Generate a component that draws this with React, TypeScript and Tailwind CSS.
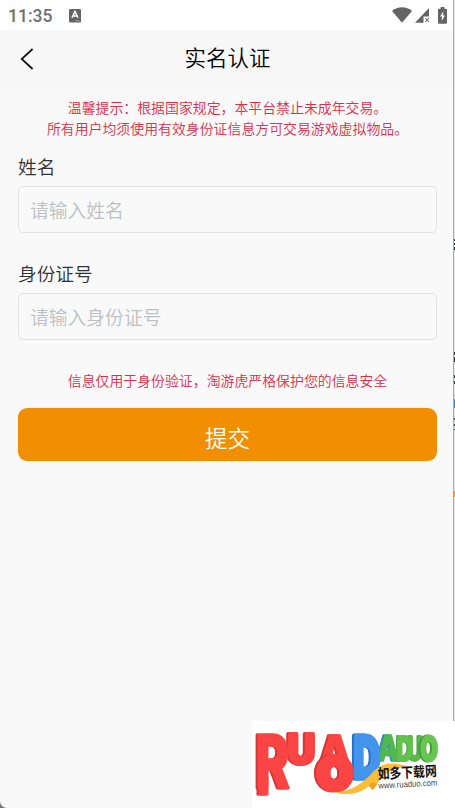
interface FieldProps {
  id: string;
  label: string;
  placeholder: string;
}

interface LogoLetterProps {
  char: string;
  x: number;
  y: number;
  sx: number;
  sy: number;
  fill: string;
  stroke?: number;
}

function StatusBar() {
  return (
    <div className="flex h-[30px] items-center bg-white pl-2 pr-[7px] text-[#646464]">
      <span className="mt-[3px] w-[61px] font-[Roboto,sans-serif] text-[17.5px] font-medium leading-none text-[#707070]">11:35</span>
      <svg className="mt-px" width="12" height="14" viewBox="0 0 12 14">
        <rect width="12" height="13.5" rx="1.2" fill="#646464" />
        <path d="M3 8.800 6 2.500l3 6.300M4 7h4" fill="none" stroke="#fff" strokeWidth="1.500" />
        <path d="M6.500 11.800h4" stroke="#bbb" strokeWidth="0.8" />
      </svg>
      <div className="ml-auto flex items-center">
        <svg width="20" height="16" viewBox="0 0 20 16" fill="#646464">
          <path d="M0 3.900C5.500-1 14.500-1 20 3.900L10 15.800Z" />
        </svg>
        <svg className="ml-[3px]" width="16" height="15" viewBox="0 0 16 15">
          <path d="M14 0v8.500H8.500v6.300H0Z" fill="#646464" />
          <path d="m10.300 10 3.700 4m0-4-3.700 4" stroke="#646464" strokeWidth="1.100" />
        </svg>
        <svg className="ml-[7px] mr-px" width="9" height="17" viewBox="0 0 10 17" preserveAspectRatio="none">
          <path d="M3 0h4v1.700h1.800q1.200 0 1.200 1.200v12.600q0 1.200-1.200 1.200H1.200Q0 16.700 0 15.500V2.900q0-1.200 1.200-1.200H3Z" fill="#646464" />
          <path d="M6 4.300 2.300 9.600h2.200L4 14l3.800-5.500H5.600Z" fill="#fff" />
        </svg>
      </div>
    </div>
  );
}

function Header() {
  return (
    <header className="grid h-[57px] grid-cols-[60px_1fr_60px] items-center bg-[#f7f7f7]">
      <button className="pl-[20px]" aria-label="返回">
        <svg width="14" height="22" viewBox="0 0 14 22" fill="none" stroke="#111" strokeWidth="1.700">
          <path d="M12.600 1 1.700 11l10.900 10" />
        </svg>
      </button>
      <h1 className="pb-[3px] text-center text-[21.500px] leading-none text-black">实名认证</h1>
    </header>
  );
}

function Field({ id, label, placeholder }: FieldProps) {
  return (
    <div className="flex flex-col">
      <label htmlFor={id} className="h-[35px] text-[18.7px] leading-[30px] text-[#333]">
        {label}
      </label>
      <input
        id={id}
        placeholder={placeholder}
        className="h-[47px] rounded-[5px] border border-[#e0e2e4] px-[11px] pb-px text-[18.8px] placeholder:text-[#bcc1c5]"
      />
    </div>
  );
}

function LogoLetter({ char, x, y, sx, sy, fill, stroke = 0.4 }: LogoLetterProps) {
  return (
    <text
      transform={`translate(${x} ${y}) scale(${sx} ${sy})`}
      fontSize="10"
      fontWeight="800"
      fill={fill}
      stroke={fill}
      strokeWidth={stroke}
      strokeLinejoin="round"
    >
      {char}
    </text>
  );
}

function SiteLogo() {
  return (
    <div className="absolute bottom-0 right-0 h-[87px] w-[203px] bg-white">
      <svg className="overflow-visible" width="203" height="87" viewBox="0 0 203 87" fontFamily="Inter, sans-serif">
        <g className="drop-shadow-[-1px_0.5px_0_#3f9c3a]">
          <LogoLetter char="U" x={155.500} y={40} sx={2.100} sy={3.450} fill="#5bb947" />
        </g>
        <g className="drop-shadow-[-1px_0.5px_0_#3f9c3a]">
          <LogoLetter char="D" x={144.500} y={40} sx={2.300} sy={3.450} fill="#62c34c" stroke={0.600} />
        </g>
        <g className="drop-shadow-[-1.5px_0.5px_0_#3f9c3a]">
          <LogoLetter char="O" x={168.500} y={40} sx={2.250} sy={3.350} fill="#69c552" stroke={0.900} />
        </g>
        <g className="drop-shadow-[-2px_0.5px_0_#348fba]">
          <LogoLetter char="A" x={125.500} y={39.500} sx={2.800} sy={3.500} fill="#4fb850" />
        </g>
        <g className="drop-shadow-[-2px_0.5px_0_#2670c8]">
          <LogoLetter char="D" x={101.500} y={56.500} sx={3.700} sy={5.800} fill="#4394ed" stroke={0.900} />
        </g>
        <path d="M83 71C100 71 112 61 121 51C131 40 145 41 156 46C142 46 134 52 127 60L121 69L117 65C106 74 92 75 83 71Z" fill="#fbbd36" />
        <path d="m117 65 3-4 5 2-4 6Z" fill="#eca31e" />
        <g className="drop-shadow-[-1.5px_0.5px_0_#d43434]">
          <LogoLetter char="U" x={36} y={43} sx={3.750} sy={4.050} fill="#fb4444" stroke={1} />
        </g>
        <g className="drop-shadow-[-1.5px_0.5px_0_#d43434]">
          <LogoLetter char="A" x={66} y={48.500} sx={4.450} sy={4.800} fill="#fb4444" stroke={0.300} />
          <path d="m71 38-6 14 9-7ZM96 38l6 14-9-7Z" fill="#fb4444" />
        </g>
        <g className="drop-shadow-[-1.5px_0.5px_0_#d43434]">
          <LogoLetter char="O" x={65.500} y={67.500} sx={4.500} sy={4.450} fill="#fb4444" stroke={1.500} />
        </g>
        <g className="drop-shadow-[-1.5px_0.5px_0_#d43434]">
          <rect x="6.500" y="55" width="10" height="19.500" rx="0.500" fill="#fb4444" />
          <LogoLetter char="R" x={3.800} y={67} sx={5.100} sy={7.250} fill="#fb4444" />
        </g>
        <g transform="rotate(-3 126 58)">
          <text x="126" y="58" fontFamily="Noto Sans CJK SC, sans-serif" fontSize="14" fontWeight="700" fill="#111" textLength="59" lengthAdjust="spacingAndGlyphs">
            如多下载网
          </text>
          <text x="126" y="67.500" fontFamily="Liberation Sans, sans-serif" fontSize="8.500" fontWeight="400" fill="#444" textLength="59" lengthAdjust="spacingAndGlyphs">
            www.ruaduo.com
          </text>
        </g>
      </svg>
    </div>
  );
}

// Sliver of the window underneath, cut off by the right edge
function WindowEdge() {
  return (
    <div className="absolute right-0 top-0 h-[721px] w-[2px] overflow-hidden border-l border-[#aaa] bg-[#e5e5e5]">
      <svg width="1" height="721" viewBox="0 0 1 721">
        <path d="M.5 239v2m0 2v2m0 2v3M.5 352v3m0 2v5M.5 375v3m0 3v3M.5 418v2m0 4v2m0 3v1" stroke="#33363c" />
        <path d="M.5 399v9" stroke="#4d85c4" />
        <path d="M.5 395v1M.5 491v6" stroke="#e79a26" />
      </svg>
    </div>
  );
}

export default function App() {
  return (
    <div className="relative h-[808px] w-[455px] overflow-hidden bg-[#777] font-[Noto_Sans_CJK_SC,sans-serif] font-[350]">
      <div className="h-full overflow-hidden rounded-bl-[7px] bg-[#f9f9f9]">
        <StatusBar />
        <Header />
        <main className="px-[18px] pt-[10px]">
          <p className="-mx-3 text-center text-[13.9px] leading-[21px] text-[#e02c48]">
            温馨提示：根据国家规定，本平台禁止未成年交易。
            <br />
            所有用户均须使用有效身份证信息方可交易游戏虚拟物品。
          </p>
          <form className="mt-[12px] flex flex-col">
            <div className="flex flex-col gap-[25px]">
              <Field id="name" label="姓名" placeholder="请输入姓名" />
              <Field id="idcard" label="身份证号" placeholder="请输入身份证号" />
            </div>
            <p className="mt-[30px] text-center text-[13.9px] leading-[21px] text-[#e02c48]">
              信息仅用于身份验证，淘游虎严格保护您的信息安全
            </p>
            <button type="button" className="mt-[17px] h-[53px] rounded-[9px] bg-[#f18f00] pt-[6px] text-[22.5px] leading-none text-white">
              提交
            </button>
          </form>
        </main>
      </div>
      <WindowEdge />
      <SiteLogo />
    </div>
  );
}
